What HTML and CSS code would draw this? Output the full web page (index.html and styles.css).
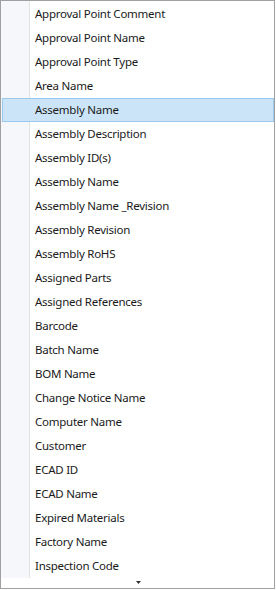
FILE: index.html
```html
<!DOCTYPE html>
<html lang="en">
<head>
    <meta charset="UTF-8">
    <title>Field menu</title>
    <link rel="stylesheet" href="styles.css">
</head>
<body>
    <div class="menu">
        <ul class="items">
            <li>Approval Point Comment</li>
            <li>Approval Point Name</li>
            <li>Approval Point Type</li>
            <li>Area Name</li>
            <li class="active">Assembly Name</li>
            <li>Assembly Description</li>
            <li>Assembly ID(s)</li>
            <li>Assembly Name</li>
            <li>Assembly Name _Revision</li>
            <li>Assembly Revision</li>
            <li>Assembly RoHS</li>
            <li>Assigned Parts</li>
            <li>Assigned References</li>
            <li>Barcode</li>
            <li>Batch Name</li>
            <li>BOM Name</li>
            <li>Change Notice Name</li>
            <li>Computer Name</li>
            <li>Customer</li>
            <li>ECAD ID</li>
            <li>ECAD Name</li>
            <li>Expired Materials</li>
            <li>Factory Name</li>
            <li>Inspection Code</li>
        </ul>
        <div class="scroll-down">
            <svg width="5" height="3" viewBox="0 0 5 3"><polygon points="0,0 5,0 2.5,3" fill="#333"/></svg>
        </div>
    </div>
</body>
</html>
```

FILE: styles.css
```css
body {
    margin: 0;
    background: #fff;
    font-family: "Noto Sans", "Open Sans", sans-serif;
    font-size: 11.5px;
    letter-spacing: -0.25px;
    color: #1a1a1a;
}

.menu {
    box-sizing: border-box;
    width: 275px;
    height: 589px;
    border: 1px solid #a0a0a0;
    display: flex;
    flex-direction: column;
}

.items {
    list-style: none;
    margin: 0;
    padding: 1px 0 0;
    background: linear-gradient(to right, #f5f7fa 0 28px, #e2e3e4 28px 29px, #fff 29px);
}

.items li {
    box-sizing: border-box;
    height: 24px;
    margin-left: 1px;
    padding-left: 32px;
    border: 1px solid transparent;
    line-height: 22px;
    white-space: nowrap;
}

.items li.active {
    background: #cce4f7;
    border-color: #99c9ef;
}

.scroll-down {
    flex: 1;
    display: flex;
    justify-content: center;
    padding-top: 3px;
    padding-left: 1px;
}

.scroll-down svg {
    display: block;
}
```
